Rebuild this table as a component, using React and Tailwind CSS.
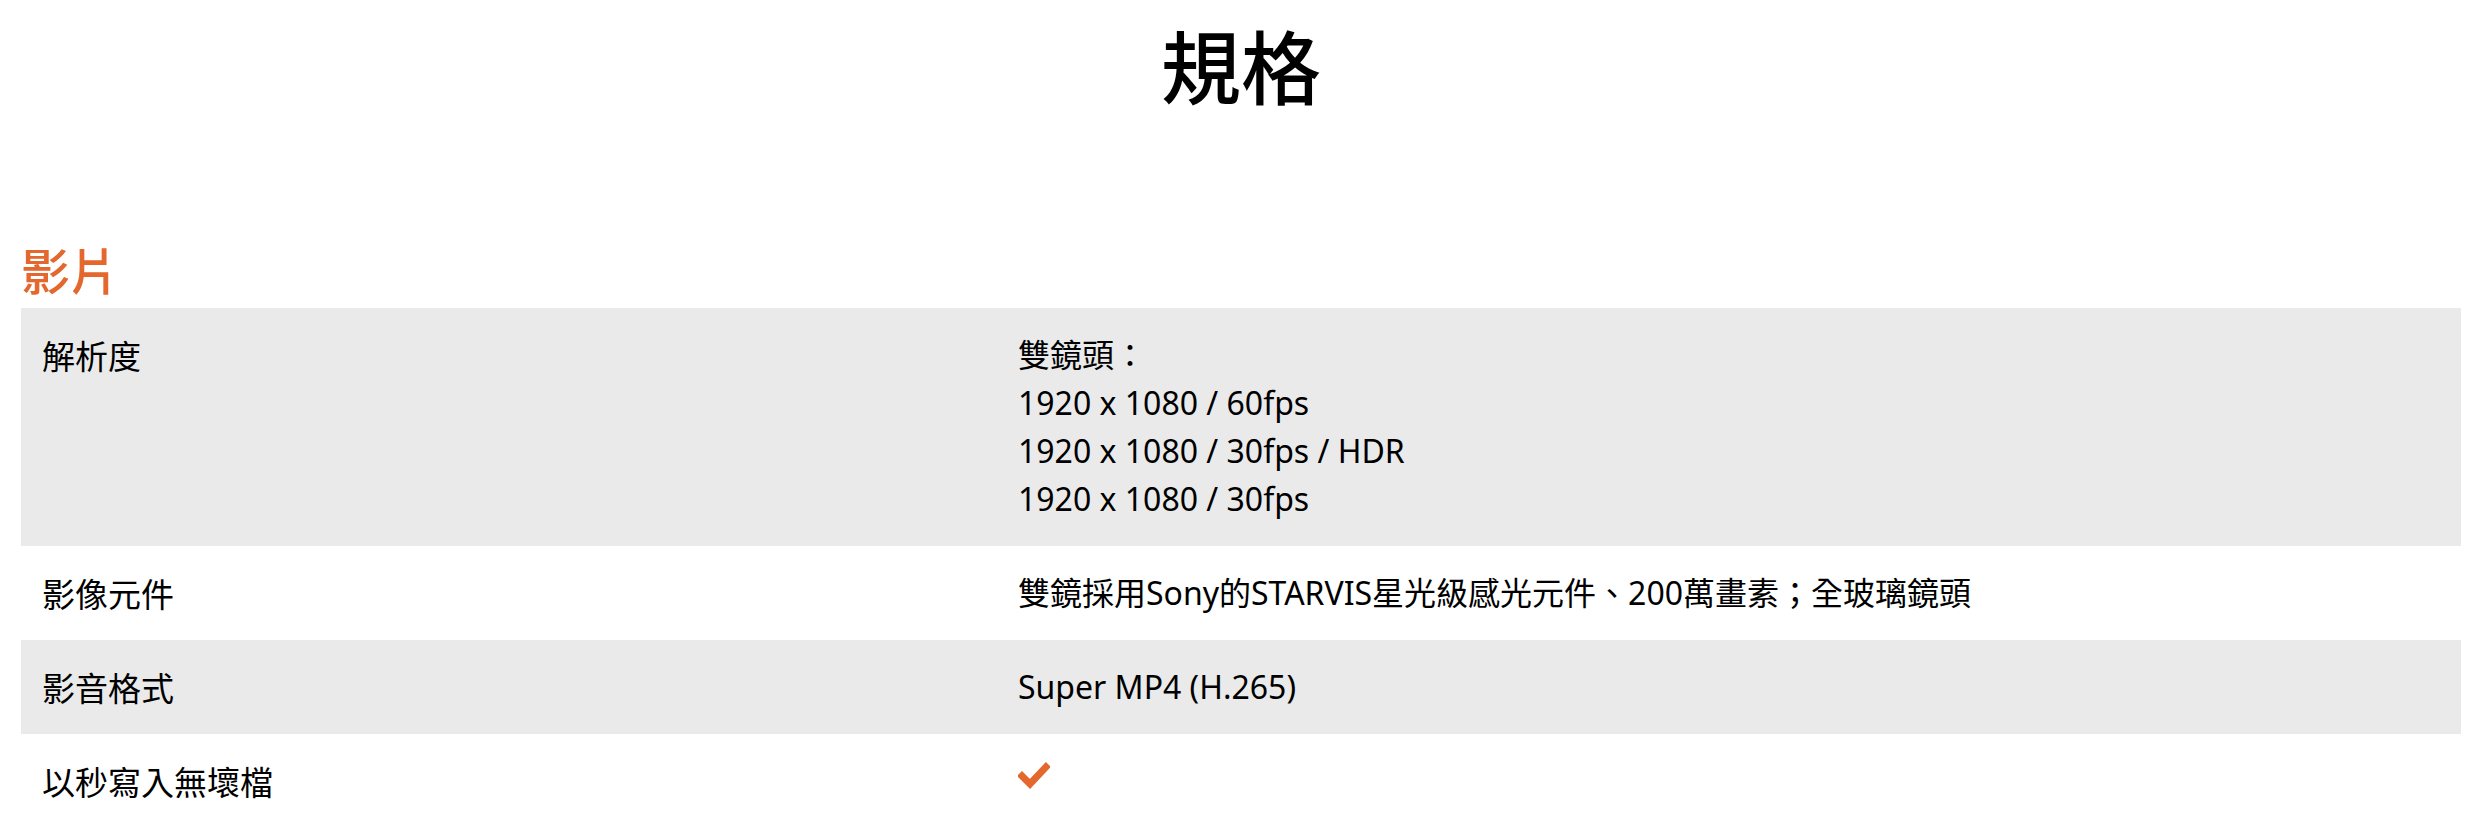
import React from "react";

const rows = [
  {
    label: "解析度",
    value: ["雙鏡頭：", "1920 x 1080 / 60fps", "1920 x 1080 / 30fps / HDR", "1920 x 1080 / 30fps"],
  },
  { label: "影像元件", value: ["雙鏡採用Sony的STARVIS星光級感光元件、200萬畫素；全玻璃鏡頭"] },
  { label: "影音格式", value: ["Super MP4 (H.265)"] },
  { label: "以秒寫入無壞檔", check: true },
];

function Check() {
  return (
    <svg width="32" height="28" viewBox="0 0 32 28" className="mt-[4px]">
      <polyline
        points="4,15 12,23 28,6"
        fill="none"
        stroke="#e4672e"
        strokeWidth="7"
        strokeLinecap="square"
        strokeLinejoin="miter"
      />
    </svg>
  );
}

export default function App() {
  return (
    <div
      className="w-full min-h-[826px] bg-white text-black"
      style={{ fontFamily: '"Noto Sans", "Noto Sans CJK TC", sans-serif' }}
    >
      <h1
        className="text-center text-[80px] leading-[96px] font-medium pt-[15px]"
        style={{ fontFamily: '"Noto Sans CJK TC", sans-serif' }}
      >
        規格
      </h1>
      <div className="px-[21px] pt-[130px]">
        <h3
          className="text-[49px] leading-[56px] font-medium text-[#e4672e] mb-[11px]"
          style={{ fontFamily: '"Noto Sans CJK TC", sans-serif' }}
        >
          影片
        </h3>
        <div className="flex flex-col">
          {rows.map((r, i) => (
            <div
              key={i}
              className={`flex leading-[48px] ${i % 2 === 0 ? "bg-[#eaeaea]" : "bg-white"}`}
            >
              <div
                className="w-[40%] px-[21px] py-[23px] text-[33px]"
                style={{ fontFamily: '"Noto Sans CJK TC", sans-serif' }}
              >
                {r.label}
              </div>
              <div className="w-[60%] px-[21px] py-[23px] text-[32px] font-normal">
                {r.check ? <Check /> : r.value.map((v, j) => <div key={j}>{v}</div>)}
              </div>
            </div>
          ))}
        </div>
      </div>
    </div>
  );
}
